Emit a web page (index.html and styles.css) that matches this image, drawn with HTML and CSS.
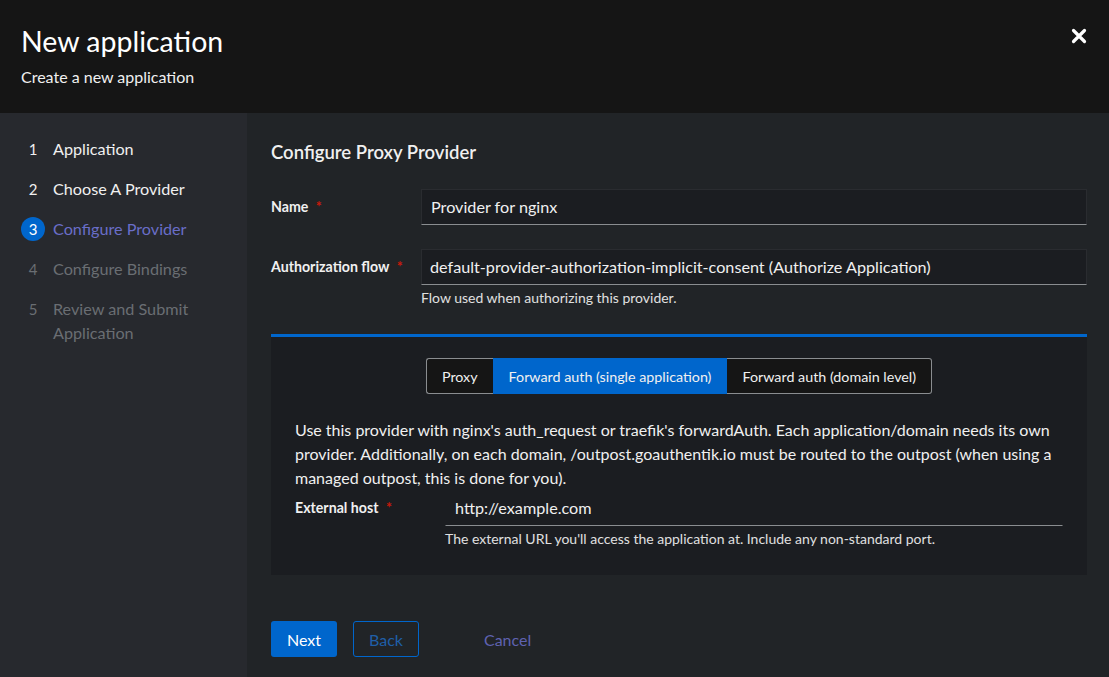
FILE: index.html
```html
<!DOCTYPE html>
<html lang="en">
<head>
<meta charset="utf-8">
<title>New application</title>
<link rel="stylesheet" href="styles.css">
</head>
<body>
<header class="header">
  <div class="header-text">
    <h1 class="title">New application</h1>
    <p class="subtitle">Create a new application</p>
  </div>
  <button class="close" aria-label="Close">
    <svg width="16" height="16" viewBox="0 0 16 16"><path d="M2.5 2.5 L13.5 13.5 M13.5 2.5 L2.5 13.5" stroke="#fff" stroke-width="3.2" stroke-linecap="round"/></svg>
  </button>
</header>
<div class="layout">
  <nav class="sidebar">
    <ol class="steps">
      <li class="step done"><span class="num">1</span><span class="label">Application</span></li>
      <li class="step done"><span class="num">2</span><span class="label">Choose A Provider</span></li>
      <li class="step current"><span class="num">3</span><span class="label">Configure Provider</span></li>
      <li class="step todo"><span class="num">4</span><span class="label">Configure Bindings</span></li>
      <li class="step todo"><span class="num">5</span><span class="label">Review and Submit Application</span></li>
    </ol>
  </nav>
  <main class="main">
    <div class="content">
      <h2 class="heading">Configure Proxy Provider</h2>
      <div class="field name">
        <label class="field-label">Name <span class="req">*</span></label>
        <div class="field-control">
          <div class="input">Provider for nginx</div>
        </div>
      </div>
      <div class="field flow">
        <label class="field-label">Authorization flow <span class="req">*</span></label>
        <div class="field-control">
          <div class="input select">default-provider-authorization-implicit-consent (Authorize Application)</div>
          <div class="helper">Flow used when authorizing this provider.</div>
        </div>
      </div>
      <section class="card">
        <div class="toggle-wrap">
          <div class="toggle-group">
            <button class="toggle">Proxy</button>
            <button class="toggle active">Forward auth (single application)</button>
            <button class="toggle">Forward auth (domain level)</button>
          </div>
        </div>
        <p class="desc">Use this provider with nginx's auth_request or traefik's forwardAuth. Each application/domain needs its own provider. Additionally, on each domain, /outpost.goauthentik.io must be routed to the outpost (when using a managed outpost, this is done for you).</p>
        <div class="field inner">
          <label class="field-label">External host <span class="req">*</span></label>
          <div class="field-control">
            <div class="input plain">http://example.com</div>
            <div class="helper">The external URL you'll access the application at. Include any non-standard port.</div>
          </div>
        </div>
      </section>
    </div>
    <footer class="footer">
      <button class="btn primary">Next</button>
      <button class="btn secondary">Back</button>
      <button class="btn link">Cancel</button>
    </footer>
  </main>
</div>
</body>
</html>
```
FILE: styles.css
```css
* { box-sizing: border-box; }
html, body { margin: 0; padding: 0; }
body {
  width: 1109px;
  height: 677px;
  overflow: hidden;
  background: #212427;
  color: #e0e0e0;
  font-family: Lato, "Open Sans", sans-serif;
  font-size: 16px;
}
button { font-family: inherit; }

.header {
  height: 113px;
  background: #151515;
  display: flex;
  justify-content: space-between;
  align-items: flex-start;
  padding: 24px 22px 0 21px;
}
.title {
  margin: 0;
  font-size: 28.5px;
  font-weight: 400;
  color: #fff;
  line-height: 34px;
}
.subtitle {
  margin: 8px 0 0;
  font-size: 16px;
  line-height: 22px;
  color: #f0f0f0;
}
.close {
  background: none;
  border: 0;
  padding: 0;
  margin-top: 4px;
  width: 16px;
  height: 16px;
  cursor: pointer;
}

.layout {
  display: flex;
  height: 564px;
}
.sidebar {
  width: 247px;
  flex: none;
  background: #27292e;
  padding: 24px 20px 0 21px;
}
.steps {
  list-style: none;
  margin: 0;
  padding: 0;
  display: flex;
  flex-direction: column;
  gap: 16px;
}
.step {
  display: flex;
  align-items: flex-start;
  line-height: 24px;
  font-size: 16.2px;
}
.num {
  width: 24px;
  height: 24px;
  flex: none;
  text-align: center;
  font-size: 15px;
  margin-right: 8px;
  border-radius: 50%;
}
.done { color: #f0f0f0; }
.current .num { background: #0066cc; color: #fff; }
.current .label { color: #6a6ec8; }
.todo { color: #6a6e73; }
.todo .label { width: 150px; }

.main {
  flex: 1;
  padding: 27px 22px 0 24px;
  display: flex;
  flex-direction: column;
}
.heading {
  margin: 0 0 25px;
  font-size: 18.5px;
  font-weight: 600;
  line-height: 24px;
  color: #f0f0f0;
}
.field {
  display: flex;
  align-items: flex-start;
}
.field.name { margin-bottom: 24px; }
.field.flow { margin-bottom: 27px; }
.field-label {
  width: 150px;
  flex: none;
  font-size: 14.2px;
  font-weight: 700;
  line-height: 36px;
  color: #f0f0f0;
}
.req {
  color: #c9190b;
  margin-left: 4px;
}
.field-control { flex: 1; }
.input {
  height: 36px;
  line-height: 34px;
  padding: 0 9px;
  background: #1b1d21;
  border: 1px solid #2a2c30;
  border-bottom-color: #8a8d90;
  color: #f0f0f0;
  font-size: 16.2px;
  white-space: nowrap;
  overflow: hidden;
}
.input.select { padding-left: 8px; }
.input.plain {
  background: transparent;
  border-color: transparent;
  border-bottom-color: #8a8d90;
}
.helper {
  margin-top: 4px;
  font-size: 14px;
  line-height: 18px;
  color: #e0e0e0;
}

.card {
  background: #1b1d21;
  border-top: 3px solid #0066cc;
  padding: 21px 24px 27px;
}
.toggle-wrap {
  display: flex;
  justify-content: center;
}
.toggle-group {
  display: flex;
}
.toggle {
  height: 36px;
  padding: 0 15px;
  background: #151515;
  color: #f0f0f0;
  font-size: 14.3px;
  border: 1px solid #8a8d90;
  cursor: pointer;
}
.toggle:first-child { border-radius: 3px 0 0 3px; border-right: 0; }
.toggle:last-child { border-radius: 0 3px 3px 0; border-left: 0; }
.toggle.active {
  background: #0066cc;
  border-color: #0066cc;
}
.desc {
  margin: 24px 0 0;
  font-size: 16px;
  line-height: 24px;
  color: #f0f0f0;
}
.field.inner { margin-bottom: 0; }

.footer {
  display: flex;
  gap: 16px;
  margin-top: 46px;
}
.btn {
  height: 36px;
  padding: 0 15px;
  font-size: 16px;
  border-radius: 3px;
  border: 1px solid transparent;
  cursor: pointer;
}
.btn.primary {
  background: #0066cc;
  color: #fff;
}
.btn.secondary {
  background: transparent;
  border-color: #0066cc;
  color: #1f5fa8;
}
.btn.link {
  background: transparent;
  color: #5f62b0;
  margin-left: 33px;
}
```
